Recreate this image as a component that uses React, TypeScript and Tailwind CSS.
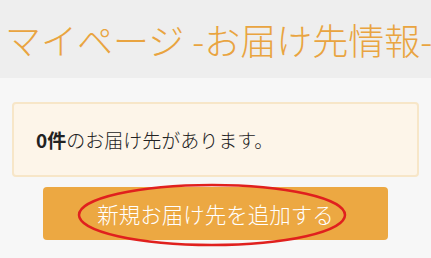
import React from "react";

export default function App() {
  const font = { fontFamily: '"Noto Sans CJK JP", "Noto Sans", sans-serif' };
  return (
    <div className="w-[431px] h-[258px] overflow-hidden bg-[#f7f7f7]" style={font}>
      <div className="h-[78px] bg-[#eeeeee] flex items-center pl-[5px] overflow-hidden whitespace-nowrap">
        <h1 className="text-[36px] leading-none text-[#e9a440] font-light">マイページ -お届け先情報-</h1>
      </div>
      <div className="px-[12px] pt-[24px]">
        <div className="h-[75px] bg-[#fdf5e9] border-2 border-[#f7e6c8] rounded-[4px] flex items-center pl-[22px]">
          <p className="text-[19px] leading-none text-[#222] font-light">
            <span className="font-bold">0件</span>のお届け先があります。
          </p>
        </div>
        <div className="mt-[10px] flex justify-center">
          <div className="relative w-[345px] h-[53px] bg-[#eca842] rounded-[4px] flex items-center justify-center">
            <span className="text-[21.5px] leading-none text-white font-light">新規お届け先を追加する</span>
            <svg className="absolute left-[34px] top-[-4px]" width="270" height="64" viewBox="0 0 270 64">
              <ellipse cx="135" cy="32" rx="133" ry="30" fill="none" stroke="#e0201e" strokeWidth="2.5" />
            </svg>
          </div>
        </div>
      </div>
    </div>
  );
}
